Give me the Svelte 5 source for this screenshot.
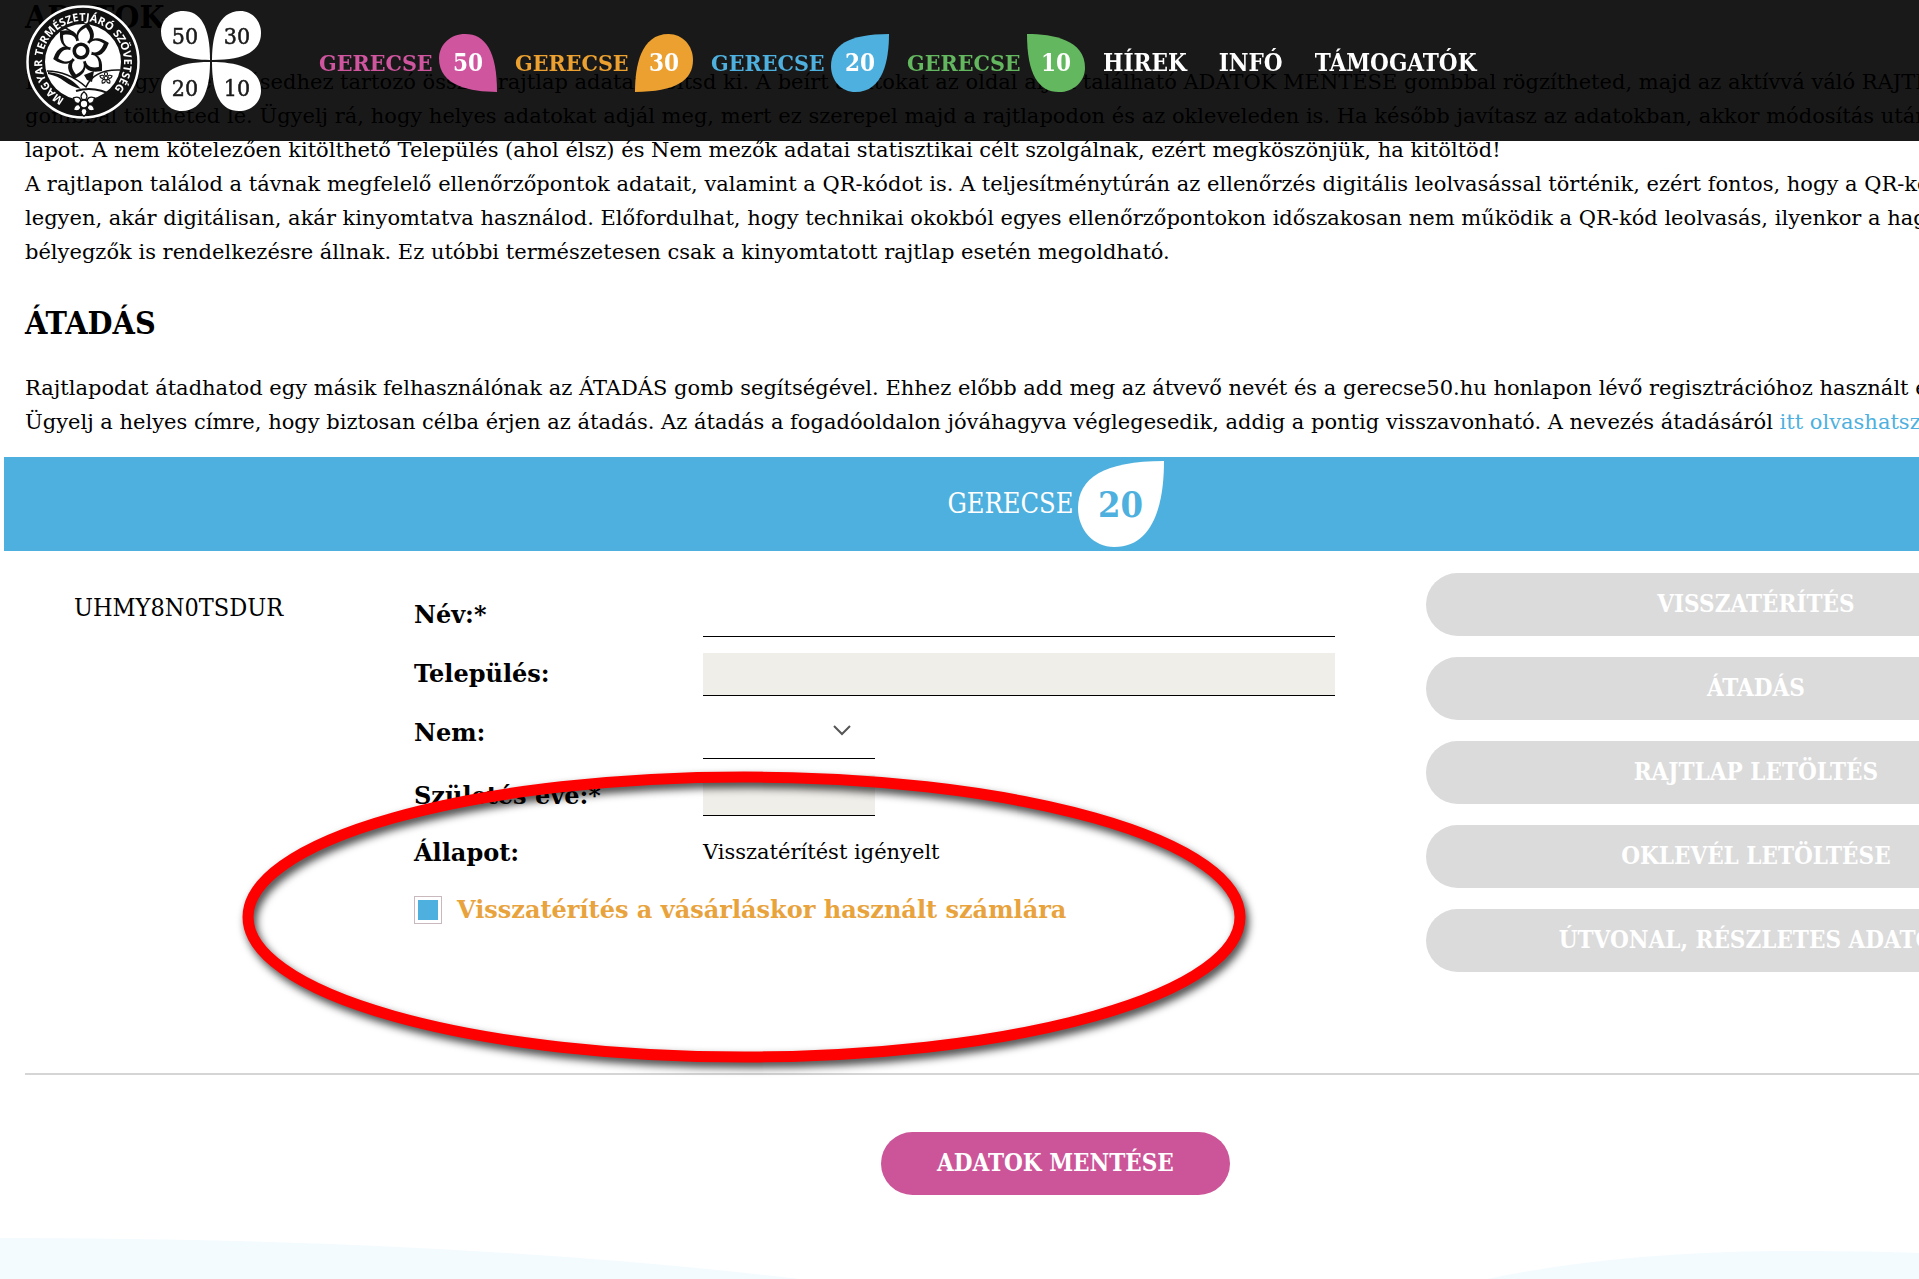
<script lang="ts">
  const leafPath = "M100 0C100 45 90 100 42 100C18 100 0 80 0 55C0 20 30 0 100 0Z";

  const races = [
    { km: 50, color: "pink", turn: 90 },
    { km: 30, color: "orange", turn: 180 },
    { km: 20, color: "blue", turn: 0 },
    { km: 10, color: "green", turn: 270 }
  ];

  const pages = ["HÍREK", "INFÓ", "TÁMOGATÓK"];

  const actions = [
    "VISSZATÉRÍTÉS",
    "ÁTADÁS",
    "RAJTLAP LETÖLTÉS",
    "OKLEVÉL LETÖLTÉSE",
    "ÚTVONAL, RÉSZLETES ADATOK"
  ];

  let name = "";
  let city = "";
  let gender = "";
  let birthYear = "";
  let refund = true;
</script>

<div class="app">
  <header>
    <a href="#mtsz" class="seal" aria-label="Magyar Természetjáró Szövetség">
      <svg viewBox="0 0 114 114" width="114" height="114">
        <defs>
          <path id="ring" d="M57 98A41 41 0 1 1 57.100 98" />
          <path id="petal" d="M0 -8C-10 -14 -9 -22 0 -29C9 -22 10 -14 0 -8Z" />
        </defs>
        <circle cx="57" cy="57" r="55.500" fill="#111" stroke="#fff" stroke-width="2.500" />
        <circle cx="57" cy="57" r="38" fill="#fff" />
        <path d="M21 66Q42 66 60 82Q68 64 94 65M48 28L38 22" fill="none" stroke="#111" stroke-width="1.500" />
        <path d="M22 67Q42 69 55 84Q46 82 38 76Q32 71 22 69Z" fill="#111" />
        <path d="M58 70L68 66L66 77L61 75Z" fill="#111" />
        <path d="M50 86Q68 80 88 91" fill="none" stroke="#111" stroke-width="2" />
        <g transform="translate(55 46) scale(.9)">
          {#each [12, 72, 132, 192, 252, 312] as angle}
            <use href="#petal" transform="rotate({angle}) translate(1 0)" fill="#111" stroke="#111" stroke-width="5" />
          {/each}
          {#each [12, 72, 132, 192, 252, 312] as angle}
            <use href="#petal" transform="rotate({angle}) scale(.92)" fill="#fff" />
          {/each}
          <circle r="12" fill="#fff" />
          <circle r="7.500" fill="#fff" stroke="#111" stroke-width="4" />
        </g>
        <g transform="translate(80 73) scale(.22)">
          {#each [0, 72, 144, 216, 288] as angle}
            <use href="#petal" transform="rotate({angle})" fill="#fff" stroke="#111" stroke-width="5" />
          {/each}
          <circle r="8" fill="#fff" stroke="#111" stroke-width="4" />
        </g>
        <g transform="translate(58 99) scale(.42)">
          {#each [0, 60, 120, 180, 240, 300] as angle}
            <use href="#petal" transform="rotate({angle})" fill="#fff" stroke="#111" stroke-width="3" />
          {/each}
          <circle r="10" fill="#fff" stroke="#111" stroke-width="5" />
        </g>
        <text class="ring-text"><textPath href="#ring" startOffset="19">MAGYAR TERMÉSZETJÁRÓ SZÖVETSÉG</textPath></text>
      </svg>
    </a>
    <a href="#fooldal" class="clover" aria-label="Gerecse 50">
      <svg viewBox="0 0 100 100" width="100" height="100">
        <g fill="#fff">
          <path transform="translate(49 0) rotate(90) scale(.49)" d={leafPath} />
          <path transform="translate(100 49) rotate(180) scale(.49)" d={leafPath} />
          <path transform="translate(0 51) scale(.49)" d={leafPath} />
          <path transform="translate(51 100) rotate(270) scale(.49)" d={leafPath} />
        </g>
        <g class="clover-text">
          <text x="24" y="33">50</text>
          <text x="76" y="33">30</text>
          <text x="24" y="85">20</text>
          <text x="76" y="85">10</text>
        </g>
      </svg>
    </a>
    <nav>
      {#each races as race}
        <a href="#gerecse-{race.km}" class="race {race.color}">
          <span class="race-name">GERECSE</span>
          <span class="leaf">
            <svg viewBox="0 0 100 100" aria-hidden="true">
              <path transform="rotate({race.turn} 50 50)" d={leafPath} fill="currentColor" />
            </svg>
            <span class="km">{race.km}</span>
          </span>
        </a>
      {/each}
      <div class="pages">
        {#each pages as page}
          <a href="#{page.toLowerCase()}">{page}</a>
        {/each}
      </div>
    </nav>
  </header>

  <main>
    <h2>ADATOK</h2>
    <p>
      Kérjük, hogy a nevezésedhez tartozó összes rajtlap adatait töltsd ki. A beírt adatokat az oldal alján található ADATOK MENTÉSE gombbal rögzítheted, majd az aktívvá váló RAJTLAP<br />
      gombbal töltheted le. Ügyelj rá, hogy helyes adatokat adjál meg, mert ez szerepel majd a rajtlapodon és az okleveleden is. Ha később javítasz az adatokban, akkor módosítás után<br />
      lapot. A nem kötelezően kitölthető Település (ahol élsz) és Nem mezők adatai statisztikai célt szolgálnak, ezért megköszönjük, ha kitöltöd!<br />
      A rajtlapon találod a távnak megfelelő ellenőrzőpontok adatait, valamint a QR-kódot is. A teljesítménytúrán az ellenőrzés digitális leolvasással történik, ezért fontos, hogy a QR-kód<br />
      legyen, akár digitálisan, akár kinyomtatva használod. Előfordulhat, hogy technikai okokból egyes ellenőrzőpontokon időszakosan nem működik a QR-kód leolvasás, ilyenkor a hagyományos<br />
      bélyegzők is rendelkezésre állnak. Ez utóbbi természetesen csak a kinyomtatott rajtlap esetén megoldható.
    </p>
    <h2>ÁTADÁS</h2>
    <p>
      Rajtlapodat átadhatod egy másik felhasználónak az ÁTADÁS gomb segítségével. Ehhez előbb add meg az átvevő nevét és a gerecse50.hu honlapon lévő regisztrációhoz használt e-mail<br />
      Ügyelj a helyes címre, hogy biztosan célba érjen az átadás. Az átadás a fogadóoldalon jóváhagyva véglegesedik, addig a pontig visszavonható. A nevezés átadásáról <a href="#atadas">itt olvashatsz</a>
    </p>

    <div class="banner">
      <span class="banner-name">GERECSE</span>
      <span class="leaf big">
        <svg viewBox="0 0 100 100" aria-hidden="true"><path d={leafPath} fill="#fff" /></svg>
        <span class="km">20</span>
      </span>
    </div>

    <section class="card">
      <div class="code">UHMY8N0TSDUR</div>

      <form id="data-form">
        <label for="name">Név:*</label>
        <input id="name" type="text" bind:value={name} />
        <label for="city">Település:</label>
        <input id="city" class="filled" type="text" bind:value={city} />
        <label for="gender">Nem:</label>
        <div class="select">
          <select id="gender" bind:value={gender}>
            <option value=""></option>
            <option value="f">Férfi</option>
            <option value="n">Nő</option>
          </select>
          <svg viewBox="0 0 18 12" width="18" height="12" aria-hidden="true">
            <path d="M1 2L9 10L17 2" fill="none" stroke="#555" stroke-width="2" />
          </svg>
        </div>
        <label for="year">Születés éve:*</label>
        <input id="year" class="filled short" type="text" bind:value={birthYear} />
        <span class="label">Állapot:</span>
        <span class="status">Visszatérítést igényelt</span>
        <label class="refund">
          <input type="checkbox" bind:checked={refund} />
          Visszatérítés a vásárláskor használt számlára
        </label>
      </form>

      <div class="actions">
        {#each actions as action}
          <button type="button" disabled>{action}</button>
        {/each}
      </div>

      <svg class="marker" viewBox="0 0 1004 292" aria-hidden="true">
        <ellipse cx="502" cy="146" rx="496" ry="140" fill="none" stroke="#f00" stroke-width="11" />
      </svg>
    </section>

    <div class="save">
      <button type="submit" form="data-form">ADATOK MENTÉSE</button>
    </div>
  </main>

  <footer>
    <svg viewBox="0 0 1919 44" preserveAspectRatio="none" aria-hidden="true">
      <path d="M0 3Q450 3 800 44H0ZM1487 44Q1620 16 1800 16Q1870 16 1919 18V44Z" fill="#f3fbff" />
    </svg>
  </footer>
</div>

<style>
  :global(body) {
    background-color: #fff;
  }

  .app {
    overflow: hidden;
    color: #000;
    font-family: "DejaVu Serif", serif;
    font-size: 21px;
    line-height: 34px;
  }

  a {
    color: #4eb0de;
    text-decoration: none;
  }

  svg {
    display: block;
  }

  header,
  h2,
  .banner,
  .code,
  button {
    font-family: "DejaVu Serif Condensed", "DejaVu Serif", serif;
  }

  header {
    position: fixed;
    top: 0;
    left: 0;
    right: 0;
    z-index: 2;
    display: flex;
    box-sizing: border-box;
    height: 141px;
    padding: 5px 26px;
    background-color: rgba(0, 0, 0, 0.9);
  }

  .ring-text {
    fill: #fff;
    font-family: "Open Sans", sans-serif;
    font-size: 11px;
    font-weight: 700;
  }

  .clover {
    padding: 6px 0 0 21px;
  }

  .clover-text {
    fill: #1a1a1a;
    stroke: #1a1a1a;
    stroke-width: 0.5px;
    font-size: 23px;
    text-anchor: middle;
  }

  nav {
    display: flex;
    align-items: center;
    height: 116px;
    margin-left: 58px;
    gap: 18px;
    font-size: 24px;
    font-weight: 700;
  }

  .race {
    display: flex;
    align-items: center;
    width: 178px;
    justify-content: space-between;
  }

  .race-name {
    font-size: 23px;
  }

  .pink {
    color: #d0559f;
  }
  .orange {
    color: #eba02f;
  }
  .blue {
    color: #4eb0de;
  }
  .green {
    color: #63b75e;
  }

  .leaf {
    display: grid;
    width: 58px;
    height: 58px;
    place-items: center;
  }

  .leaf svg,
  .km {
    grid-area: 1 / 1;
  }

  .leaf svg {
    width: 100%;
    height: 100%;
  }

  .km {
    color: #fff;
    font-size: 24px;
  }

  .pages {
    display: flex;
    gap: 32px;
  }

  .pages a {
    color: #fff;
  }

  main {
    box-sizing: border-box;
    width: 110vw;
    padding: 1px 25px 0;
  }

  h2 {
    margin: 38px 0 32px;
    font-size: 32px;
    line-height: 32px;
  }

  h2:first-child {
    margin-top: 0;
  }

  p {
    margin: 0;
    white-space: nowrap;
  }

  .banner {
    display: flex;
    align-items: center;
    justify-content: center;
    height: 94px;
    margin: 18px -21px 0;
    gap: 4px;
    color: #fff;
    background-color: #4eb0de;
  }

  .banner-name {
    font-size: 27px;
  }

  .big {
    width: 86px;
    height: 86px;
  }

  .big .km {
    color: #4eb0de;
    font-size: 36px;
    font-weight: 700;
  }

  .card {
    position: relative;
    display: grid;
    grid-template-columns: 389fr 1012fr 660fr;
    height: 522px;
    border-bottom: 2px solid #d5d5d5;
  }

  .code {
    padding: 40px 0 0 49px;
    font-size: 25px;
  }

  form {
    display: grid;
    grid-template-columns: 289px 632px;
    align-content: start;
    padding-top: 43px;
    row-gap: 16px;
  }

  label,
  .label {
    font-size: 24px;
    font-weight: 700;
    line-height: 41px;
  }

  .status {
    line-height: 41px;
  }

  input[type="text"],
  select {
    box-sizing: border-box;
    width: 100%;
    height: 43px;
    padding: 0 8px;
    border: 0;
    border-bottom: 1px solid #000;
    border-radius: 0;
    background: none;
    font: inherit;
  }

  input.filled {
    background-color: #f0eee9;
  }

  input.short {
    width: 172px;
    height: 41px;
  }

  .select {
    display: grid;
    width: 172px;
    height: 47px;
  }

  .select select,
  .select svg {
    grid-area: 1 / 1;
  }

  .select select {
    height: 47px;
    appearance: none;
  }

  .select svg {
    margin: 12px 24px 0 0;
    justify-self: end;
    pointer-events: none;
  }

  .refund {
    display: flex;
    align-items: center;
    grid-column: 1 / -1;
    gap: 15px;
    color: #e8a33d;
    white-space: nowrap;
  }

  .refund input {
    box-sizing: border-box;
    width: 28px;
    height: 28px;
    margin: 0;
    padding: 3px;
    border: 1px solid #c9b9bd;
    appearance: none;
  }

  .refund input:checked {
    background-color: #4eb0de;
    background-clip: content-box;
  }

  .actions {
    display: flex;
    flex-direction: column;
    padding-top: 22px;
    gap: 21px;
  }

  button {
    height: 63px;
    padding: 0 56px 2px;
    border: 0;
    border-radius: 32px;
    color: #fff;
    background-color: #cc5599;
    font-size: 24px;
    font-weight: 700;
  }

  button:disabled {
    color: #fff;
    background-color: #dbdbdb;
  }

  /* hand-drawn highlight lying over the form */
  .marker {
    position: absolute;
    top: 220px;
    left: 217px;
    width: 1004px;
    overflow: visible;
    filter: drop-shadow(3px 5px 4px rgba(0, 0, 0, 0.75));
    pointer-events: none;
  }

  .save {
    display: flex;
    justify-content: center;
    padding: 57px 0 40px;
  }

  footer svg {
    width: 100%;
    height: 44px;
  }
</style>
